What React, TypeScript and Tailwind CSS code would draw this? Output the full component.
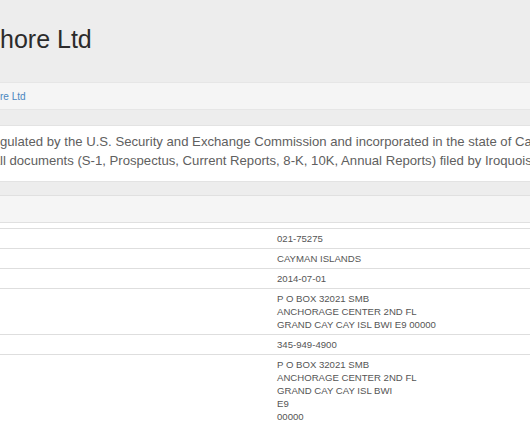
const rows: string[][] = [
  ['021-75275'],
  ['CAYMAN ISLANDS'],
  ['2014-07-01'],
  ['P O BOX 32021 SMB', 'ANCHORAGE CENTER 2ND FL', 'GRAND CAY CAY ISL BWI E9 00000'],
  ['345-949-4900'],
  ['P O BOX 32021 SMB', 'ANCHORAGE CENTER 2ND FL', 'GRAND CAY CAY ISL BWI', 'E9', '00000'],
]

// text that starts left of the visible area: prefix is pushed out to the left
function Clipped({ hidden, shown }: { hidden: string; shown: string }) {
  return (
    <div className="flex whitespace-nowrap">
      <span className="flex w-0 justify-end">{hidden}</span>
      <span>{shown}</span>
    </div>
  )
}

export default function App() {
  return (
    <div className="min-h-[442px] w-full overflow-hidden bg-[#ededed] font-['Liberation_Sans',Arial,sans-serif]">
      <header className="h-[82px] pt-[27px]">
        <h1 className="text-[25px] leading-[25px] text-[#2b2b2b]">
          <Clipped hidden="Iroquois Master Fund Offs" shown="hore Ltd" />
        </h1>
      </header>

      <nav className="flex h-[28px] items-center border-y border-[#e6e6e6] bg-[#f5f5f5] text-[10px] text-[#4a86c0]">
        <Clipped hidden="Home / Companies / Iroquois Master Fund Offsho" shown="re Ltd" />
      </nav>

      <div className="h-[15px]" />

      <section className="border-y border-[#e3e3e3] bg-white pb-[11px] pt-[6px] text-[13.15px] leading-[19px] text-[#606060]">
        <Clipped
          hidden="Iroquois Master Fund Offshore Ltd is re"
          shown="gulated by the U.S. Security and Exchange Commission and incorporated in the state of Cayman Islands."
        />
        <Clipped
          hidden="Below you will find a"
          shown="ll documents (S-1, Prospectus, Current Reports, 8-K, 10K, Annual Reports) filed by Iroquois Master Fund Offshore Ltd."
        />
      </section>

      <div className="h-[13px]" />

      <section className="bg-white">
        <div className="h-[28px] border-y border-[#e0e0e0] bg-[#f5f5f5]" />
        <div className="h-[5px]" />
        <div className="text-[9.6px] leading-[13px] text-[#555]">
          {rows.map((lines, i) => (
            <div key={i} className="grid grid-cols-[277px_1fr] border-t border-[#dedede] py-[3px]">
              <div />
              <div>
                {lines.map((line, j) => (
                  <div key={j}>{line}</div>
                ))}
              </div>
            </div>
          ))}
          <div className="h-[30px]" />
        </div>
      </section>
    </div>
  )
}
